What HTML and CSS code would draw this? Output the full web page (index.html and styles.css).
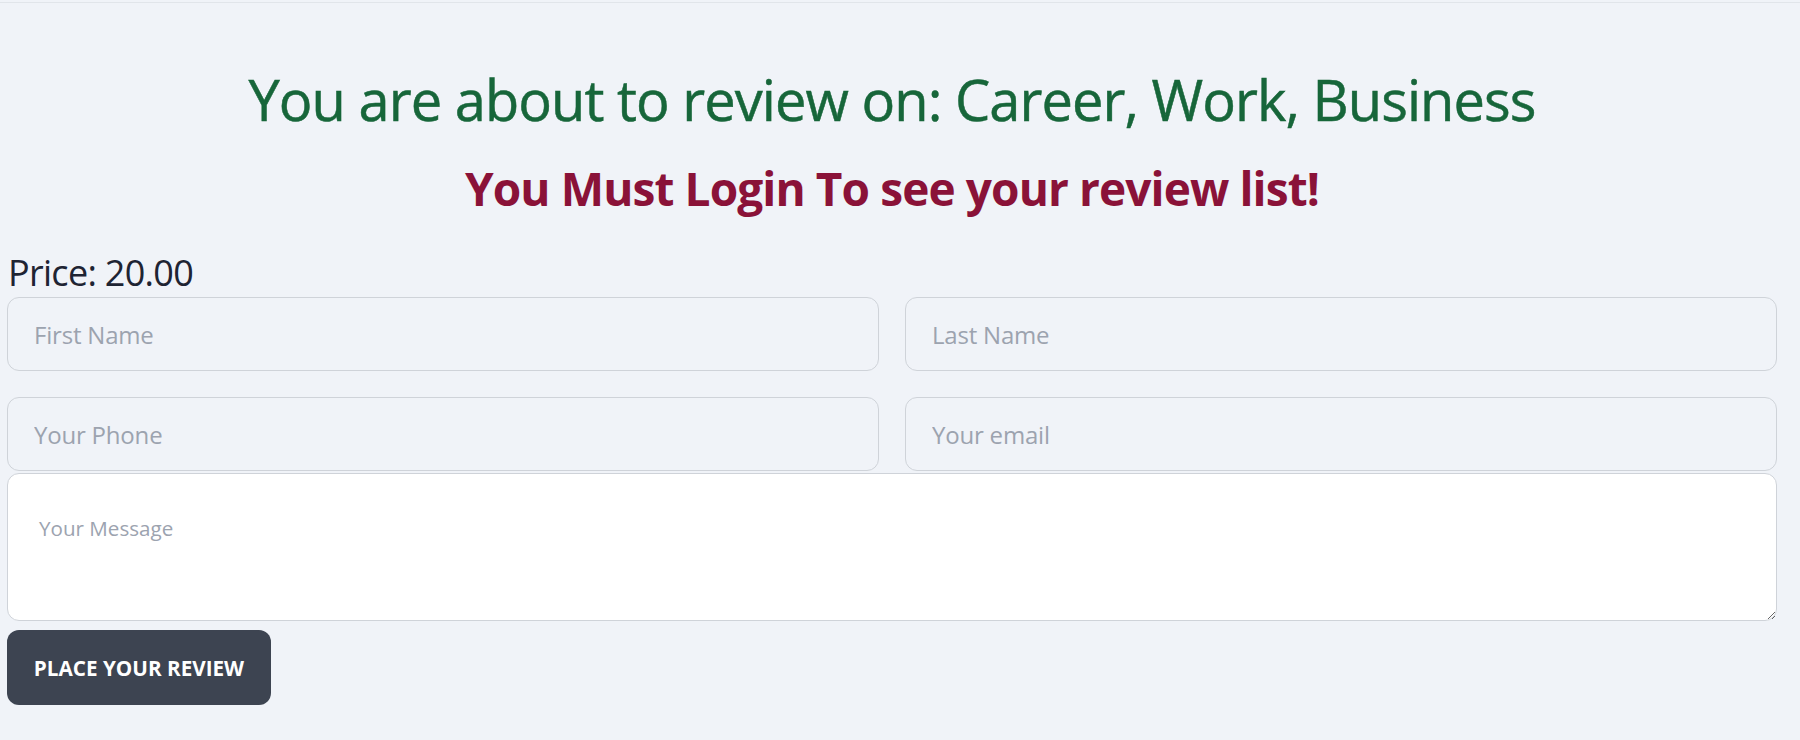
FILE: index.html
```html
<!DOCTYPE html>
<html lang="en">
<head>
<meta charset="utf-8">
<title>Review</title>
<link rel="stylesheet" href="styles.css">
</head>
<body>
<div class="topline"></div>
<main class="page">
  <h1 class="title">You are about to review on: Career, Work, Business</h1>
  <h2 class="warning">You Must Login To see your review list!</h2>
  <p class="price">Price: 20.00</p>
  <form class="review-form">
    <div class="fields">
      <input class="field" type="text" placeholder="First Name">
      <input class="field" type="text" placeholder="Last Name">
      <input class="field" type="text" placeholder="Your Phone">
      <input class="field" type="email" placeholder="Your email">
    </div>
    <textarea class="message" placeholder="Your Message"></textarea>
    <button class="submit" type="button">PLACE YOUR REVIEW</button>
  </form>
</main>
</body>
</html>
```

FILE: styles.css
```css
html, body {
  margin: 0;
  padding: 0;
  background: #f0f3f8;
}
body {
  font-family: "Open Sans", "Noto Sans", sans-serif;
  color: #1f2937;
}
.topline {
  height: 2px;
  border-bottom: 1px solid #e1e5ea;
}
.page {
  width: 1770px;
  padding: 0 23px 0 7px;
}
.title {
  margin: 64px 0 0;
  font-size: 56px;
  line-height: 64px;
  font-weight: 500;
  letter-spacing: -0.95px;
  color: #17663a;
  text-align: center;
  -webkit-text-stroke: 0.5px #17663a;
}
.warning {
  margin: 29px 0 0;
  font-size: 46px;
  line-height: 56px;
  font-weight: 700;
  letter-spacing: -0.9px;
  color: #8a1238;
  text-align: center;
}
.price {
  margin: 37px 0 0;
  padding-left: 1px;
  font-size: 36px;
  line-height: 40px;
  letter-spacing: -0.7px;
  color: #1e2433;
}
.review-form {
  margin-top: 4px;
}
.fields {
  display: grid;
  grid-template-columns: 1fr 1fr;
  column-gap: 26px;
  row-gap: 26px;
}
.field {
  box-sizing: border-box;
  height: 74px;
  width: 100%;
  margin: 0;
  padding: 0 26px;
  border: 1px solid #cfd3d9;
  border-radius: 12px;
  background: transparent;
  font-family: inherit;
  font-size: 24px;
  line-height: 32px;
  letter-spacing: -0.2px;
  color: #1f2937;
}
.field::placeholder,
.message::placeholder {
  color: #9ca3af;
}
.message {
  display: block;
  box-sizing: border-box;
  width: 100%;
  height: 148px;
  margin: 2px 0 0;
  padding: 40px 31px 0;
  border: 1px solid #cfd3d9;
  border-radius: 12px;
  background: #ffffff;
  font-family: inherit;
  font-size: 20.6px;
  line-height: 28px;
}
.submit {
  display: block;
  box-sizing: border-box;
  margin-top: 9px;
  width: 264px;
  height: 75px;
  padding: 0;
  border: none;
  border-radius: 12px;
  background: #3d4451;
  color: #ffffff;
  font-family: inherit;
  font-size: 20.7px;
  font-weight: 700;
}
```
